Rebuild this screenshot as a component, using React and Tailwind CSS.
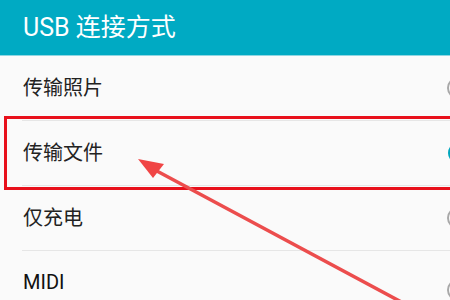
function Radio({ selected }) {
  return selected ? (
    <div className="shrink-0 mr-[-20px] w-[22px] h-[22px] rounded-full border-[2px] border-[#00a6bd] flex items-center justify-center">
      <div className="w-[12px] h-[12px] rounded-full bg-[#00a6bd]" />
    </div>
  ) : (
    <div className="shrink-0 mr-[-19px] w-[22px] h-[22px] rounded-full border-[2px] border-[#a8a8a8]" />
  );
}

export default function App() {
  const font = { fontFamily: 'Roboto, "Noto Sans CJK SC", sans-serif' };
  const rows = [
    { label: "传输照片", selected: false },
    { label: "传输文件", selected: true },
    { label: "仅充电", selected: false },
  ];
  return (
    <div className="relative w-[450px] h-[300px] overflow-hidden bg-[#fafafa]" style={font}>
      <div className="h-[56px] bg-[#00aac3] border-b border-[#8fd6e2] flex items-center pl-[23px]">
        <span className="text-white text-[25px] leading-none">USB 连接方式</span>
      </div>
      <div className="flex flex-col pl-[22px]">
        {rows.map((r, i) => (
          <div key={i} className="h-[65px] flex items-center justify-between pl-px border-b border-[#e6e6e6]">
            <span className="text-[#222] text-[20px] leading-none">{r.label}</span>
            <Radio selected={r.selected} />
          </div>
        ))}
        <div className="flex justify-between items-start pt-[21px] pl-px">
          <div className="flex flex-col gap-[11px]">
            <div className="text-[#111] text-[20px] leading-none">MIDI</div>
            <div className="text-[#8a8a8a] text-[16px] leading-none">将设备用作 MIDI 输入设备</div>
          </div>
          <div className="mt-[7px]">
            <Radio selected={false} />
          </div>
        </div>
      </div>
      <div className="absolute left-[4px] top-[116px] w-[460px] h-[74px] border-[3px] border-[#e8101b]" />
      <svg className="absolute left-0 top-0" width="450" height="300" viewBox="0 0 450 300">
        <line x1="155" y1="170" x2="420" y2="312" stroke="#ec4d4d" strokeWidth="3.5" strokeLinecap="round" />
        <polygon points="138,159 164,164 153,178" fill="#f04545" />
      </svg>
    </div>
  );
}
